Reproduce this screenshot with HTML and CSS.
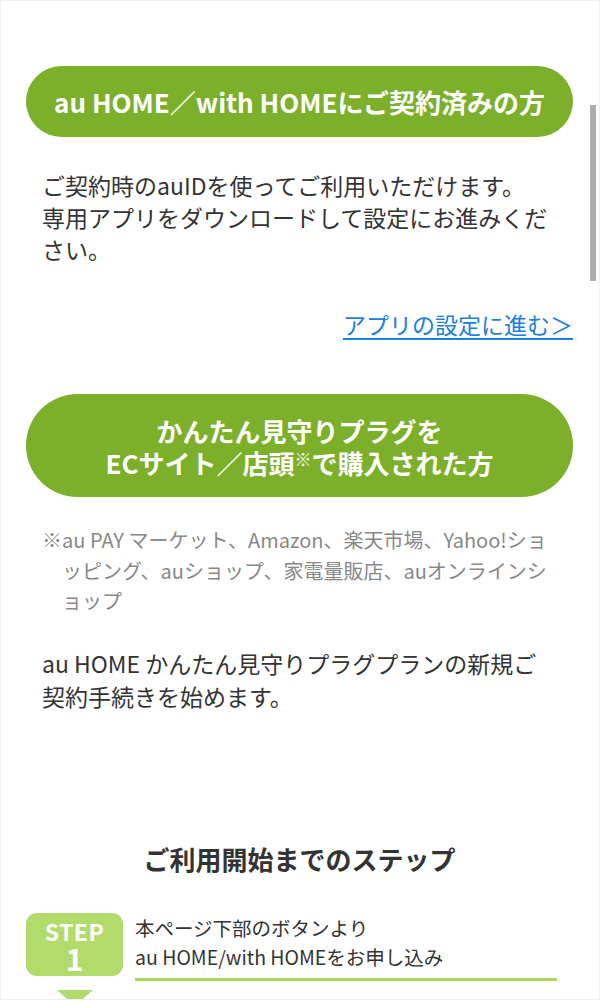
FILE: index.html
```html
<!DOCTYPE html>
<html lang="ja">
<head>
<meta charset="utf-8">
<title>au HOME</title>
<link rel="stylesheet" href="styles.css">
</head>
<body>
<main class="page">
  <section class="block block-first">
    <div class="pill">au HOME／with HOMEにご契約済みの方</div>
    <p class="text">ご契約時のauIDを使ってご利用いただけます。<br>専用アプリをダウンロードして設定にお進みください。</p>
    <div class="link-row"><a class="link" href="#">アプリの設定に進む＞</a></div>
  </section>

  <section class="block block-second">
    <div class="pill pill-tall">かんたん見守りプラグを<br>ECサイト／店頭<span class="mark">※</span>で購入された方</div>
    <p class="note">※au PAY マーケット、Amazon、楽天市場、Yahoo!ショッピング、auショップ、家電量販店、auオンラインショップ</p>
    <p class="text">au HOME かんたん見守りプラグプランの新規ご契約手続きを始めます。</p>
  </section>

  <section class="steps">
    <h2 class="steps-title">ご利用開始までのステップ</h2>
    <div class="step">
      <div class="step-badge-col">
        <div class="step-badge"><span class="step-label">STEP</span><span class="step-num">1</span></div>
        <div class="step-arrow"></div>
      </div>
      <div class="step-body">
        <p class="step-text">本ページ下部のボタンより<br>au HOME/with HOMEをお申し込み</p>
      </div>
    </div>
  </section>
</main>
<div class="frame"></div>
<div class="scrollbar"></div>
</body>
</html>
```
FILE: styles.css
```css
* { box-sizing: border-box; }
html, body {
  margin: 0;
  padding: 0;
  background: #fff;
}
body {
  font-family: "Noto Sans CJK JP", "Noto Sans", sans-serif;
  color: #333;
}
.page {
  padding: 66px 27px 0 26px;
}
.block-first {
  display: flex;
  flex-direction: column;
}
.pill {
  background: #7cb02b;
  color: #fff;
  font-weight: 700;
  font-size: 26px;
  line-height: 32px;
  text-align: center;
  border-radius: 60px;
  padding: 20px 12px 19px;
}
.pill-tall {
  padding: 21px 12px 18px;
}
.mark {
  display: inline-block;
  font-size: 17px;
  line-height: 14px;
  vertical-align: 8px;
}
.text {
  margin: 0;
  padding: 0 16px;
  font-size: 23px;
  line-height: 32px;
  color: #333;
}
.block-first .text {
  margin-top: 32px;
}
.link-row {
  margin-top: 43px;
  text-align: right;
}
.link {
  font-size: 23px;
  line-height: 32px;
  color: #1a80e4;
  text-decoration: underline;
  text-underline-offset: 4px;
  text-decoration-thickness: 2px;
}
.block-second {
  margin-top: 54px;
}
.note {
  margin: 28px 0 0;
  padding: 0 16px 0 36px;
  text-indent: -20px;
  font-size: 20px;
  line-height: 30.5px;
  color: #888;
}
.block-second .text {
  margin-top: 30px;
  line-height: 33px;
}
.steps {
  margin-top: 128px;
}
.steps-title {
  margin: 0;
  text-align: center;
  font-size: 26px;
  line-height: 36px;
  font-weight: 700;
  color: #333;
}
.step {
  margin-top: 36px;
  display: flex;
  gap: 12px;
}
.step-badge-col {
  display: flex;
  flex-direction: column;
  align-items: center;
  gap: 14px;
}
.step-badge {
  width: 97px;
  height: 63px;
  background: #b1dc6c;
  border-radius: 11px;
  color: #fff;
  display: flex;
  flex-direction: column;
  align-items: center;
  justify-content: center;
  font-weight: 700;
  padding-top: 3px;
}
.step-label {
  font-size: 23px;
  line-height: 24px;
  letter-spacing: 0.5px;
}
.step-num {
  font-size: 30px;
  line-height: 30px;
}
.step-arrow {
  width: 0;
  height: 0;
  border-left: 18px solid transparent;
  border-right: 18px solid transparent;
  border-top: 16px solid #b1dc6c;
}
.step-body {
  flex: 1;
  padding-right: 16px;
}
.step-text {
  margin: 0;
  padding-bottom: 7px;
  font-size: 19.5px;
  line-height: 29px;
  color: #333;
  border-bottom: 3px solid #a8d85e;
}
.frame {
  position: fixed;
  inset: 0;
  border: 1px solid #efeff8;
  pointer-events: none;
}
.scrollbar {
  position: fixed;
  left: 590px;
  top: 105px;
  width: 6px;
  height: 176px;
  background: #adadad;
}
```
